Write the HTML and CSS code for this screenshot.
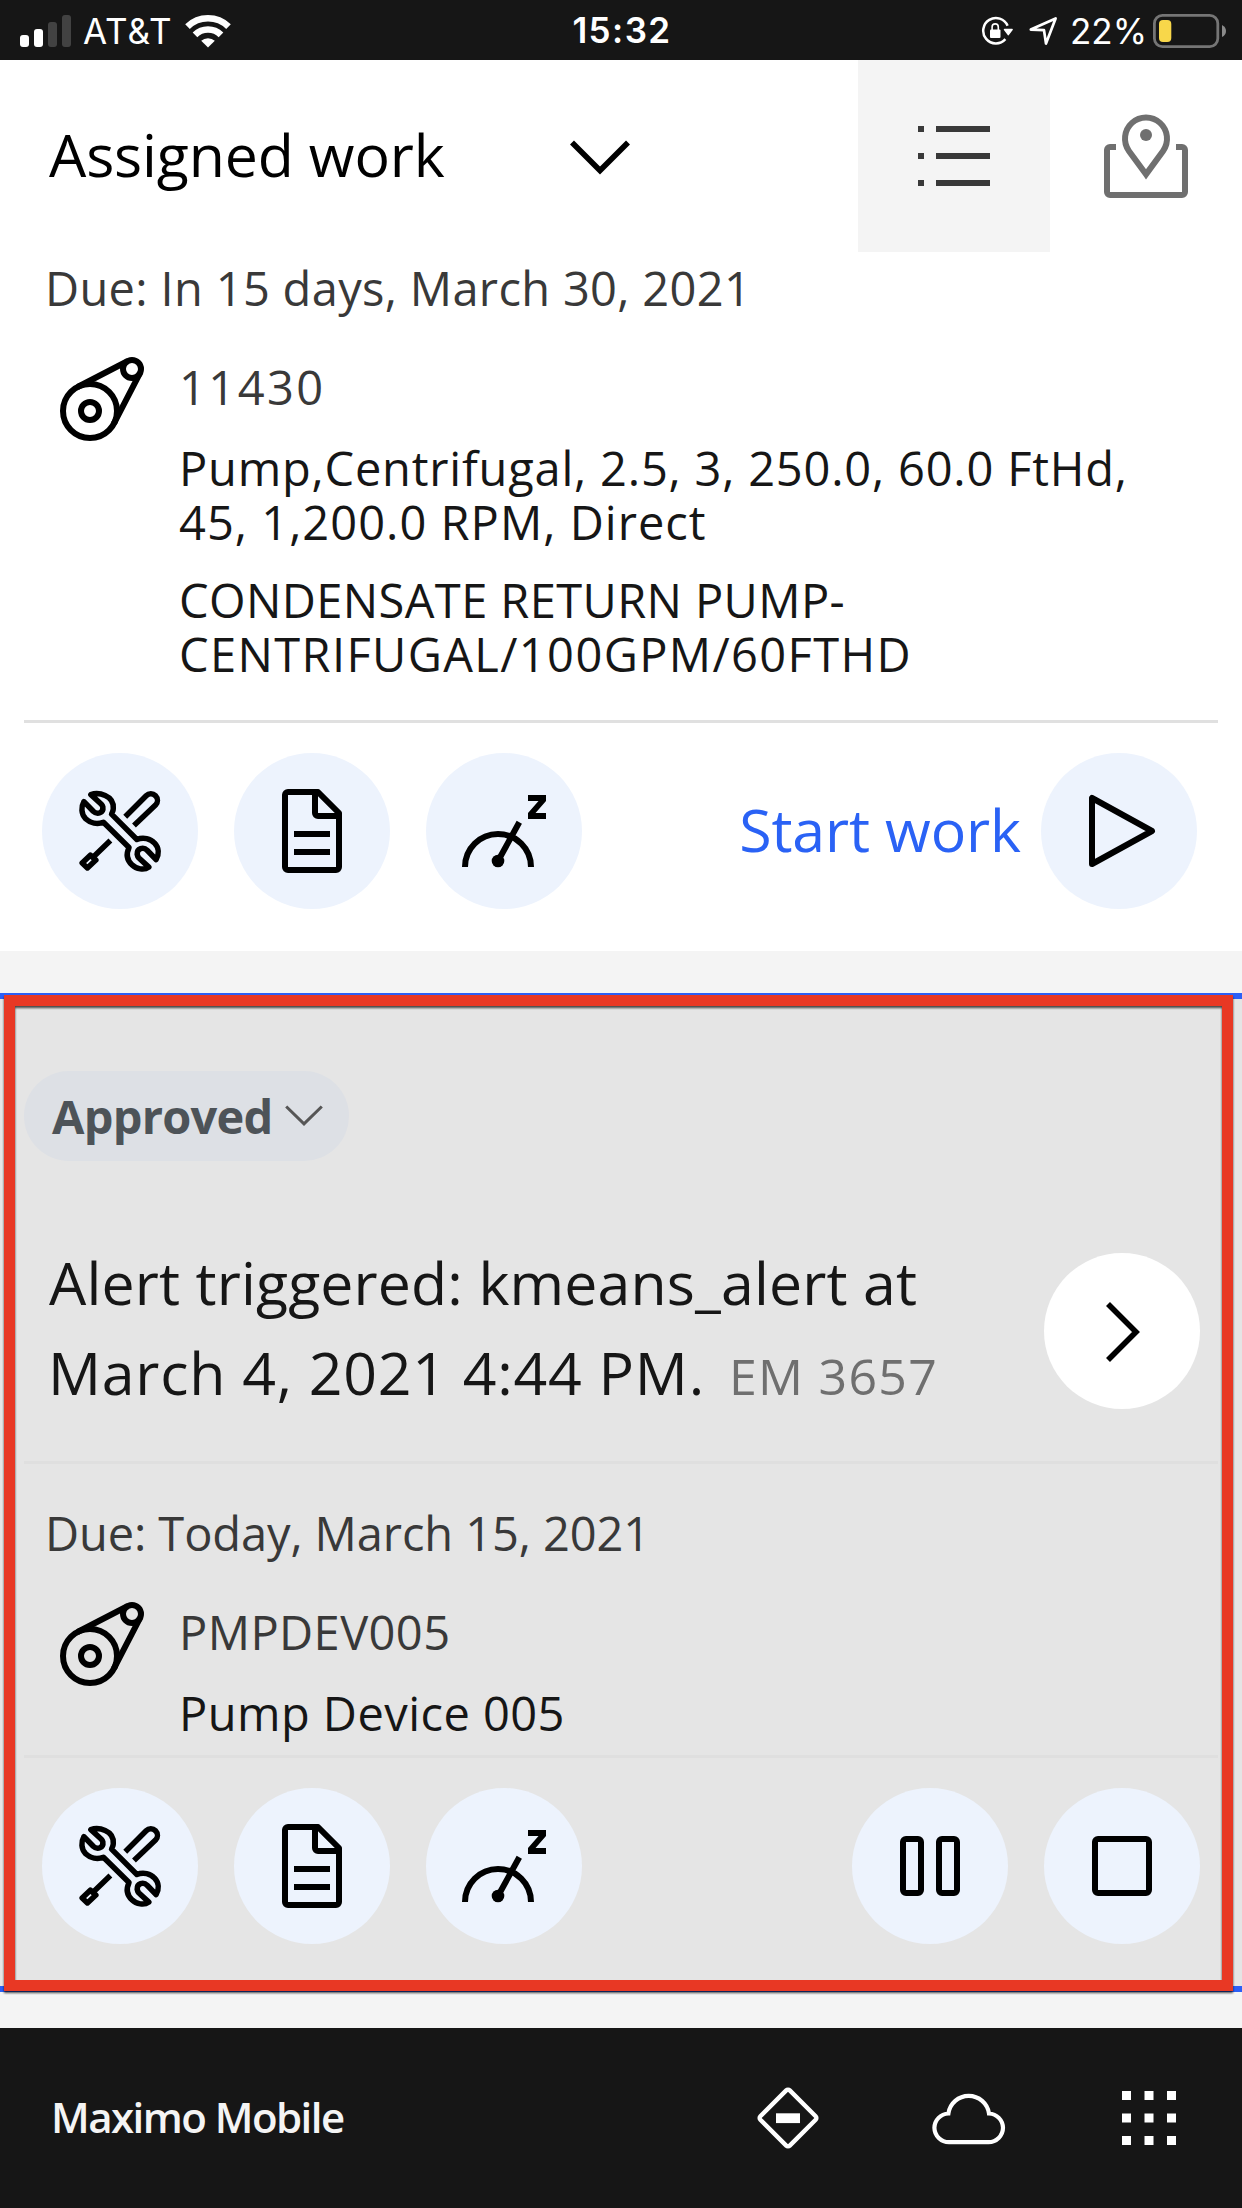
FILE: index.html
```html
<!DOCTYPE html>
<html lang="en">
<head>
<meta charset="utf-8">
<title>Maximo Mobile</title>
<link rel="stylesheet" href="styles.css">
</head>
<body>
<svg class="defs" width="0" height="0" aria-hidden="true">
  <symbol id="pump" viewBox="0 0 32 32">
    <g fill="none" stroke="currentColor" stroke-width="2">
      <circle cx="12" cy="20" r="9"/><circle cx="12" cy="20" r="3"/><circle cx="26" cy="6" r="3"/>
      <path d="M7.86 12.01 24.62 3.34M20 24.14 28.66 7.38"/>
    </g>
  </symbol>
  <symbol id="tools" viewBox="0 0 32 32">
    <g fill="none" stroke="currentColor" stroke-width="1.9" stroke-linejoin="round" transform="translate(16 16) scale(.97) translate(-16 -16)">
      <path d="M6 3.5C8.5 2.6 14 3.6 13.7 8.3C13.7 9.2 13.4 9.6 13.1 10.2L21.8 18.9C24 18 26.5 18.6 27.9 20.2C29.4 21.8 29.5 24 28.4 25.8L25.4 22.7C24 21.3 21.8 22 21.9 24C22 24.6 22.2 25 22.5 25.3L25.9 28.4C24.3 29.6 21.6 29.1 20.1 27.6C18.4 26 18.1 23.8 19.1 21.7L10.3 13C8.2 13.8 5.8 13.3 4.2 11.8C2.6 10.2 2.6 7.7 3.6 5.9L6.8 9.2C8.2 10.5 10.4 9.8 10.1 7.7C10 7.2 9.8 7 9.5 6.7Z"/>
      <path d="M17.8 11.1 25 3.9A2.25 2.25 0 0 1 28.2 7.1L20.8 14.1M12.7 19.3 7 24.8"/>
      <path d="M5.8 24.3 7.7 26 4.8 28.7 3 27Z"/>
    </g>
  </symbol>
  <symbol id="document" viewBox="0 0 32 32">
    <path fill="currentColor" d="M25.7 9.3l-7-7A.9.9 0 0 0 18 2H8a2 2 0 0 0-2 2v24a2 2 0 0 0 2 2h16a2 2 0 0 0 2-2V10a.9.9 0 0 0-.3-.7ZM18 4.4 23.6 10H18ZM24 28H8V4h8v6a2 2 0 0 0 2 2h6ZM10 16h12v2H10ZM10 22h12v2H10Z"/>
  </symbol>
  <symbol id="meter" viewBox="0 0 32 32">
    <path fill="none" stroke="currentColor" stroke-width="2" d="M3 28a11 11 0 0 1 22 0M14 26 21.1 13.1"/>
    <circle cx="14" cy="26" r="2.1" fill="currentColor"/>
    <path fill="currentColor" d="M24 4h6v2l-3.5 4H30v2h-6v-2l3.5-4H24Z"/>
  </symbol>
  <symbol id="play" viewBox="0 0 32 32">
    <path fill="none" stroke="currentColor" stroke-width="2" stroke-linejoin="round" d="M7 5v22l20-11Z"/>
  </symbol>
  <symbol id="pause" viewBox="0 0 32 32">
    <g fill="none" stroke="currentColor" stroke-width="2">
      <rect x="7" y="7" width="6" height="18" rx="1"/><rect x="19" y="7" width="6" height="18" rx="1"/>
    </g>
  </symbol>
  <symbol id="stop" viewBox="0 0 32 32">
    <rect x="7" y="7" width="18" height="18" rx="1" fill="none" stroke="currentColor" stroke-width="2"/>
  </symbol>
</svg>

<div class="app">
  <div class="status">
    <div class="status-left">
      <svg width="51" height="32" viewBox="0 0 51 32"><g fill="#fff"><rect y="20" width="9" height="12" rx="3"/><rect x="14" y="14" width="9" height="18" rx="3"/></g><g fill="#424242"><rect x="28" y="7" width="9" height="25" rx="3"/><rect x="42" width="9" height="32" rx="3"/></g></svg>
      <span class="carrier">AT&amp;T</span>
      <svg class="wifi" width="46" height="34" viewBox="0 0 46 34"><g fill="none" stroke="#fff" stroke-width="6.6"><path d="M2.5 12.6a29.5 29.5 0 0 1 41 0"/><path d="M10 20.8a18.5 18.5 0 0 1 26 0"/></g><path fill="#fff" d="M16.2 26.8a10 10 0 0 1 13.6 0L23 33.6Z"/></svg>
    </div>
    <span class="clock">15:32</span>
    <div class="status-right">
      <svg width="32" height="30" viewBox="0 0 32 30"><path fill="none" stroke="#fff" stroke-width="2.5" d="M24.4 23.2A12.7 12.7 0 1 1 26.6 9.8"/><path fill="#fff" stroke="#fff" stroke-width="1.5" stroke-linejoin="round" d="M23.5 13.6h7.6L27.3 18.6Z"/><rect x="9" y="13.5" width="10.5" height="8.5" rx="1" fill="#fff"/><path fill="none" stroke="#fff" stroke-width="1.6" d="M11.1 14v-3a3.1 3.1 0 0 1 6.2 0v3"/></svg>
      <svg class="locate" width="29" height="30" viewBox="0 0 29 30"><path fill="none" stroke="#fff" stroke-width="2.7" stroke-linejoin="round" d="M1.8 13.6 26.6 2.4 17 27.6 15 14.2Z"/></svg>
      <span class="percent">22%</span>
      <svg width="74" height="34" viewBox="0 0 74 34"><rect x="1.4" y="1.4" width="63.4" height="31.2" rx="8" fill="none" stroke="#757575" stroke-width="2.8"/><rect x="6" y="6" width="12.3" height="22" rx="4" fill="#f8d74a"/><path fill="#8a8a8a" d="M69 11q4 2 4 6t-4 6Z"/></svg>
    </div>
  </div>

  <header class="toolbar">
    <h1 class="toolbar-title">Assigned work</h1>
    <svg class="chevron" width="60" height="36" viewBox="0 0 60 36"><path fill="none" stroke="#000" stroke-width="5.6" d="M2 2.5 30 30.5 58 2.5"/></svg>
    <div class="views">
      <div class="view view-active">
        <svg width="96" height="96" viewBox="0 0 32 32" fill="#393939"><path d="M4 6h2v2H4zM10 6h18v2H10zM4 15h2v2H4zM10 15h18v2H10zM4 24h2v2H4zM10 24h18v2H10z"/></svg>
      </div>
      <div class="view">
        <svg width="96" height="96" viewBox="0 0 32 32"><g fill="none" stroke="#6f6f6f" stroke-width="2"><path d="M6 13H4a1 1 0 0 0-1 1v14a1 1 0 0 0 1 1h24a1 1 0 0 0 1-1V14a1 1 0 0 0-1-1h-2"/><path d="M16 22.1 10.3 14.3A7 7.05 0 1 1 21.7 14.3Z"/></g><circle cx="16" cy="9" r="2" fill="#6f6f6f"/></svg>
      </div>
    </div>
  </header>

  <section class="card">
    <p class="due due-a">Due: In 15 days, March 30, 2021</p>
    <div class="asset">
      <svg class="pump"><use href="#pump"/></svg>
      <div class="asset-text">
        <p class="asset-id id-a">11430</p>
        <p class="desc desc-a">Pump,Centrifugal, 2.5, 3, 250.0, 60.0 FtHd,<br><span class="desc-end">45, 1,200.0 RPM, Direct</span></p>
        <p class="desc"><span class="loc-a">CONDENSATE RETURN PUMP-</span><br><span class="loc-b">CENTRIFUGAL/100GPM/60FTHD</span></p>
      </div>
    </div>
    <div class="actions actions-a">
      <button class="round"><svg><use href="#tools"/></svg></button>
      <button class="round"><svg><use href="#document"/></svg></button>
      <button class="round"><svg><use href="#meter"/></svg></button>
      <span class="start">Start work</span>
      <button class="round"><svg><use href="#play"/></svg></button>
    </div>
  </section>

  <section class="card card-selected">
    <div class="pill">Approved<svg width="38" height="22" viewBox="0 0 38 22"><path fill="none" stroke="#565656" stroke-width="3" d="M1.2 1.5 19 18.8 36.8 1.5"/></svg></div>
    <div class="summary">
      <h2 class="summary-title"><span class="title-a">Alert triggered: kmeans_alert at</span><br><span class="title-b">March 4, 2021 4:44 PM.</span><span class="number">EM 3657</span></h2>
      <button class="round round-white"><svg><path fill="none" stroke="#000" stroke-width="5.6" d="M34 21 62 49 34 77"/></svg></button>
    </div>
    <p class="due due-b">Due: Today, March 15, 2021</p>
    <div class="asset">
      <svg class="pump"><use href="#pump"/></svg>
      <div class="asset-text">
        <p class="asset-id id-b">PMPDEV005</p>
        <p class="desc desc-b">Pump Device 005</p>
      </div>
    </div>
    <div class="actions actions-b">
      <button class="round"><svg><use href="#tools"/></svg></button>
      <button class="round"><svg><use href="#document"/></svg></button>
      <button class="round"><svg><use href="#meter"/></svg></button>
      <button class="round push"><svg><use href="#pause"/></svg></button>
      <button class="round"><svg><use href="#stop"/></svg></button>
    </div>
    <div class="highlight"></div>
  </section>

  <footer class="footer">
    <span class="brand">Maximo Mobile</span>
    <svg width="64" height="64" viewBox="0 0 64 64"><rect x="11.2" y="11.2" width="41.6" height="41.6" rx="2.5" transform="rotate(45 32 32)" fill="none" stroke="#fff" stroke-width="4.4"/><path fill="#fff" d="M20 27.3h24v9.8H20z"/></svg>
    <svg class="cloud" width="74" height="54" viewBox="0 0 74 54"><path fill="none" stroke="#fff" stroke-width="4.2" d="M17 50.2H56.5A14.6 14.6 0 0 0 71 35.8A14.6 14.6 0 0 0 57 21.5A20.5 20.5 0 0 0 16.4 21.5A14.6 14.6 0 0 0 2.4 35.8A14.6 14.6 0 0 0 17 50.2Z"/></svg>
    <svg class="grid" width="54" height="54" viewBox="0 0 54 54"><path fill="#fff" d="M0 0h9v9H0zM22.5 0h9v9h-9zM45 0h9v9h-9zM0 22.5h9v9H0zM22.5 22.5h9v9h-9zM45 22.5h9v9h-9zM0 45h9v9H0zM22.5 45h9v9h-9zM45 45h9v9h-9z"/></svg>
  </footer>
</div>
</body>
</html>
```
FILE: styles.css
```css
* { box-sizing: border-box; margin: 0; padding: 0; }

body {
  width: 1242px;
  background: #f4f4f4;
  color: #161616;
  font-family: "Open Sans", "Noto Sans", sans-serif;
}

svg { display: block; flex: none; }
.defs { position: absolute; }

.app {
  display: flex;
  flex-direction: column;
  width: 1242px;
  height: 2208px;
}

/* Status bar */
.status {
  display: grid;
  grid-template-columns: 1fr auto 1fr;
  height: 60px;
  padding: 0 15px 0 20px;
  background: #161616;
  color: #fff;
  font: 400 35px/60px Inter, "Liberation Sans", sans-serif;
}
.status-left, .status-right { display: flex; align-items: center; }
.status-right { justify-content: flex-end; }
.carrier { margin: 1px 0 0 12px; letter-spacing: 0.95px; }
.wifi { margin-left: 12px; }
.clock { margin: 0 3px 0 0; font-weight: 600; letter-spacing: 1.44px; }
.locate { margin-left: 16px; }
.percent { margin: 1px 6px 0 12px; letter-spacing: 0; }

/* Toolbar */
.toolbar {
  display: flex;
  align-items: center;
  height: 192px;
  padding-left: 49px;
  background: #fff;
}
.toolbar-title {
  width: 521px;
  margin-bottom: 4px;
  color: #000;
  font-weight: 400;
  font-size: 59px;
  line-height: 60px;
  letter-spacing: -0.15px;
}
.chevron { margin-top: 4px; }
.views { display: flex; margin-left: auto; }
.view {
  display: flex;
  align-items: center;
  justify-content: center;
  width: 192px;
  height: 192px;
}
.view-active { background: #f4f4f4; }

/* Work order cards */
.card { background: #fff; }
.due {
  padding: 9px 0 0 45px;
  color: #393939;
  font-size: 47px;
  line-height: 54px;
}
.due-a { letter-spacing: 0.33px; }
.due-b {
  margin: 0 24px;
  padding: 42px 0 0 21px;
  border-top: 3px solid #dfdfdf;
  letter-spacing: -0.1px;
}
.asset {
  display: flex;
  padding: 36px 0 0 54px;
  font-size: 47px;
  line-height: 54px;
}
.pump { width: 96px; height: 96px; color: #000; }
.asset-text { padding: 9px 0 0 29px; }
.asset-id { color: #393939; }
.id-a { letter-spacing: 2.45px; }
.id-b { letter-spacing: 0.42px; }
.desc-a { margin-top: 27px; margin-bottom: 24px; letter-spacing: 0.8px; }
.desc-end { letter-spacing: 1.03px; }
.desc-b { margin-top: 27px; letter-spacing: 0.45px; }
.loc-a { letter-spacing: 0.4px; }
.loc-b { letter-spacing: 1.38px; }

.actions {
  display: flex;
  align-items: center;
  gap: 36px;
  margin: 39px 24px 0;
  padding: 30px 21px 42px 18px;
  border-top: 3px solid #e0e0e0;
}
.actions-b { margin-top: 15px; padding-right: 18px; border-top-color: #dfdfdf; }
.push { margin-left: auto; }
.round {
  display: flex;
  align-items: center;
  justify-content: center;
  flex: none;
  width: 156px;
  height: 156px;
  border: 0;
  border-radius: 50%;
  background: #edf3fd;
  color: #000;
}
.round svg { width: 96px; height: 96px; }
.start {
  margin: 0 -16px 0 auto;
  padding-bottom: 4px;
  color: #2a62f5;
  font-size: 59px;
  line-height: 60px;
  letter-spacing: -0.11px;
}

.card-selected {
  position: relative;
  margin-top: 42px;
  padding-top: 72px;
  border-top: 6px solid #2c5ff6;
  border-bottom: 6px solid #2c5ff6;
  background: #e5e5e5;
}
.pill {
  display: flex;
  align-items: center;
  width: 325px;
  height: 90px;
  margin-left: 24px;
  padding-left: 28px;
  border-radius: 45px;
  background: #dde0e5;
  color: #4d5358;
  font-weight: 700;
  font-size: 47px;
  line-height: 90px;
  letter-spacing: -0.75px;
}
.pill svg { margin: 0 0 1px 12px; }
.summary {
  display: flex;
  justify-content: space-between;
  height: 300px;
  padding: 76px 42px 0 49px;
}
.summary-title {
  font-weight: 400;
  font-size: 59px;
  line-height: 90px;
  white-space: nowrap;
}
.title-a { letter-spacing: 0.13px; }
.title-b { margin-left: -1px; letter-spacing: 0.75px; }
.number {
  margin-left: 24px;
  color: #6f6f6f;
  font-size: 50px;
  line-height: 1;
  letter-spacing: 1.3px;
}
.round-white { margin-top: 16px; background: #fff; }

/* Red outline drawn over the selected card */
.highlight {
  position: absolute;
  top: -4px;
  right: 9px;
  bottom: -5px;
  left: 4px;
  border: 11px solid #e83824;
  filter: drop-shadow(0 2px 1px rgba(0, 0, 0, 0.7));
  pointer-events: none;
}

/* Footer */
.footer {
  display: flex;
  align-items: center;
  height: 180px;
  margin-top: auto;
  padding: 0 66px 0 51px;
  background: #161616;
}
.brand {
  margin: 0 auto 2px 0;
  color: #f4f4f4;
  font-weight: 600;
  font-size: 42px;
  line-height: 60px;
  letter-spacing: -1.54px;
}
.cloud { margin: 2px 116px 0 112px; }
```
